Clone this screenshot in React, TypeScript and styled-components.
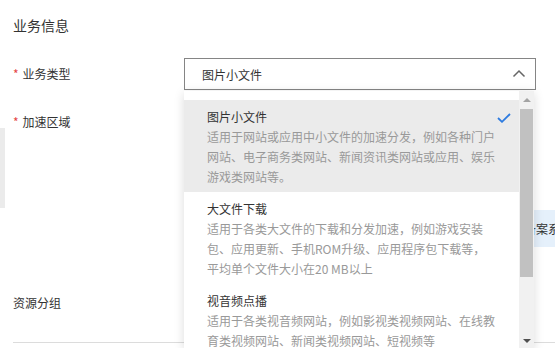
import * as React from 'react';
import styled, { createGlobalStyle } from 'styled-components';

const GlobalStyle = createGlobalStyle`
	html, body {
		margin: 0;
		padding: 0;
		background: #fff;
		overflow: hidden;
	}
	body {
		font-family: "Noto Sans CJK SC", "Noto Sans", sans-serif;
		font-size: 12px;
		color: #333;
	}
`;

const Page = styled.div`
	position: relative;
	width: 555px;
	height: 348px;
	padding: 15px 0 0 13px;
	box-sizing: border-box;
	overflow: hidden;
`;

const SideHandle = styled.div`
	position: absolute;
	left: 0;
	top: 128px;
	width: 5px;
	height: 80px;
	background: #ebebeb;
`;

const SectionTitle = styled.h2`
	margin: 0 0 23px;
	font-size: 14px;
	font-weight: normal;
	line-height: 20px;
	color: #333;
`;

const FormRow = styled.div<{ $gap?: number }>`
	display: grid;
	grid-template-columns: 171px 1fr;
	margin-bottom: ${(p) => p.$gap ?? 16}px;
`;

const Label = styled.div`
	line-height: 32px;
	color: #333;
	white-space: nowrap;
`;

const Required = styled.span`
	color: #e54545;
	margin-right: 4px;
`;

const SelectWrap = styled.div`
	position: relative;
	width: 352px;
`;

const SelectBox = styled.div`
	height: 32px;
	box-sizing: border-box;
	border: 1px solid #858585;
	padding: 0 9px 0 17px;
	display: flex;
	align-items: center;
	justify-content: space-between;
	background: #fff;
`;

const Dropdown = styled.div`
	position: absolute;
	z-index: 10;
	top: 33px;
	left: 0;
	width: 350px;
	height: 258px;
	background: #fff;
	box-shadow: 0 2px 10px rgba(0, 0, 0, 0.14);
	display: flex;
	overflow: hidden;
`;

const OptionList = styled.ul`
	flex: 1;
	list-style: none;
	margin: 0;
	padding: 9px 0 0;
`;

const Option = styled.li<{ $active?: boolean }>`
	position: relative;
	padding: 7px 0 5px 23px;
	background: ${(p) => (p.$active ? '#ebebeb' : '#fff')};
	line-height: 20px;
`;

const OptionTitle = styled.div`
	color: #333;
`;

const OptionDesc = styled.div`
	width: 290px;
	color: #999;
`;

const Check = styled.svg`
	position: absolute;
	right: 8px;
	top: 13px;
`;

const Scrollbar = styled.div`
	width: 15px;
	background: #f1f1f1;
	display: flex;
	flex-direction: column;
`;

const ScrollArrow = styled.div<{ $down?: boolean; $muted?: boolean }>`
	height: 17px;
	display: flex;
	align-items: center;
	justify-content: center;
	&::after {
		content: '';
		border-left: 4px solid transparent;
		border-right: 4px solid transparent;
		${(p) => (p.$down ? 'border-top' : 'border-bottom')}: 4px solid ${(p) => (p.$muted ? '#a3a3a3' : '#505050')};
	}
`;

const ScrollThumb = styled.div`
	margin: 1px 1px 0 1px;
	height: 168px;
	background: #c1c1c1;
`;

const ScrollRest = styled.div`
	flex: 1;
`;

const RegionArea = styled.div`
	height: 141px;
	display: flex;
	align-items: flex-end;
`;

const RegionTab = styled.div`
	margin-left: 330px;
	height: 37px;
	padding: 0 10px;
	background: #e5f0fb;
	line-height: 37px;
	color: #333;
	white-space: nowrap;
`;

const Divider = styled.div`
	height: 1px;
	background: #dcdcdc;
	width: 600px;
`;

interface OptionItem {
	title: string;
	desc: string;
}

const options: Array<OptionItem> = [
	{
		title: '图片小文件',
		desc: '适用于网站或应用中小文件的加速分发，例如各种门户网站、电子商务类网站、新闻资讯类网站或应用、娱乐游戏类网站等。',
	},
	{
		title: '大文件下载',
		desc: '适用于各类大文件的下载和分发加速，例如游戏安装包、应用更新、手机ROM升级、应用程序包下载等，平均单个文件大小在20 MB以上',
	},
	{
		title: '视音频点播',
		desc: '适用于各类视音频网站，例如影视类视频网站、在线教育类视频网站、新闻类视频网站、短视频等',
	},
];

const App = (): React.ReactElement => {
	const [ selected ] = React.useState<number>(0);

	return (
		<Page>
			<GlobalStyle />
			<SideHandle />
			<SectionTitle>业务信息</SectionTitle>
			<FormRow>
				<Label>
					<Required>*</Required>业务类型
				</Label>
				<SelectWrap>
					<SelectBox>
						<span>{options[selected].title}</span>
						<svg width="14" height="14" viewBox="0 0 14 14">
							<path d="M1.5 9.5 L7 4 L12.5 9.5" fill="none" stroke="#666" strokeWidth="1.5" />
						</svg>
					</SelectBox>
					<Dropdown>
						<OptionList>
							{options.map((v, i) => (
								<Option key={i} $active={i === selected}>
									<OptionTitle>{v.title}</OptionTitle>
									<OptionDesc>{v.desc}</OptionDesc>
									{i === selected && (
										<Check width="14" height="10" viewBox="0 0 14 10">
											<path d="M1 5 L5 8.8 L13 1" fill="none" stroke="#2d7be0" strokeWidth="1.8" />
										</Check>
									)}
								</Option>
							))}
						</OptionList>
						<Scrollbar>
							<ScrollArrow $muted />
							<ScrollThumb />
							<ScrollRest />
							<ScrollArrow $down />
						</Scrollbar>
					</Dropdown>
				</SelectWrap>
			</FormRow>
			<FormRow $gap={40}>
				<Label>
					<Required>*</Required>加速区域
				</Label>
				<RegionArea>
					<RegionTab>备案系统</RegionTab>
				</RegionArea>
			</FormRow>
			<FormRow $gap={23}>
				<Label>资源分组</Label>
				<div />
			</FormRow>
			<Divider />
		</Page>
	);
};

export default App;
